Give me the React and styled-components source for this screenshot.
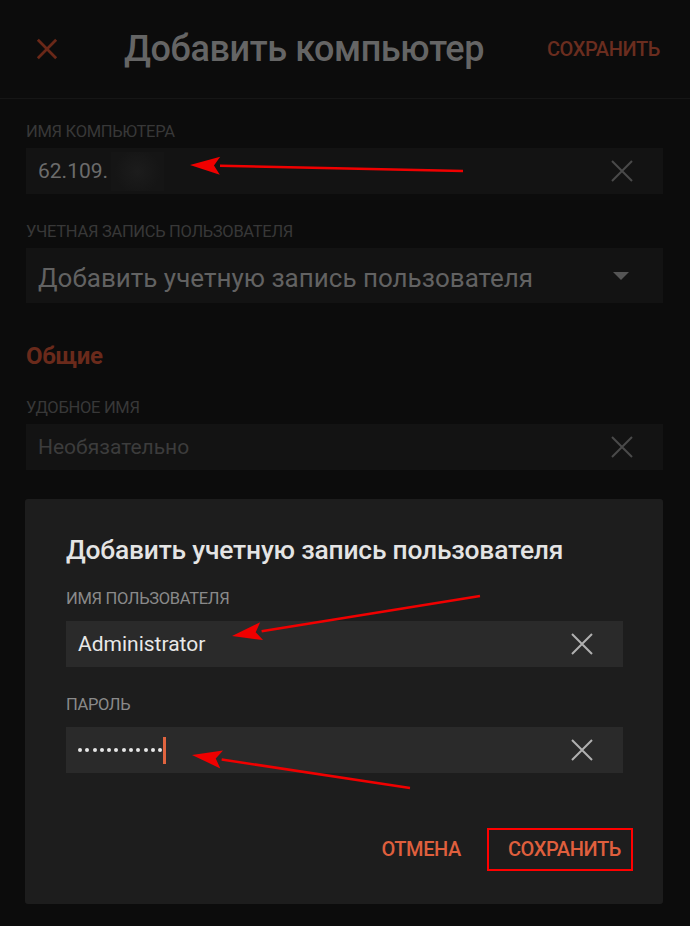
import React from 'react';
import styled, { createGlobalStyle } from 'styled-components';

const GlobalStyle = createGlobalStyle`
  * {
    box-sizing: border-box;
  }

  body {
    margin: 0;
    background: #0c0c0c;
    font-family: Roboto, 'Noto Sans', 'Liberation Sans', sans-serif;
  }
`;

const Page = styled.div`
  position: relative;
  width: 690px;
  height: 926px;
  background: #0c0c0c;
  overflow: hidden;
`;

const Header = styled.header`
  height: 99px;
  border-bottom: 1px solid #161616;
  padding: 0 30px 0 36px;

  display: flex;
  align-items: center;
`;

const HeaderTitle = styled.h1`
  margin: 0 0 0 66px;
  font-size: 36px;
  font-weight: 500;
  color: #656565;
  letter-spacing: -0.4px;
`;

const HeaderAction = styled.span`
  margin-left: auto;
  font-size: 20px;
  font-weight: 500;
  color: #6a2d1f;
  letter-spacing: -0.4px;
`;

const Form = styled.div`
  padding: 22px 27px 0 26px;
`;

const Label = styled.div`
  height: 22px;
  line-height: 22px;
  font-size: 16.5px;
  color: ${(p) => (p.$light ? '#8a8a8a' : '#383838')};
  letter-spacing: -0.3px;
  margin-bottom: ${(p) => p.$gap || 5}px;
`;

const Field = styled.div`
  height: ${(p) => p.$h || 46}px;
  background: ${(p) => (p.$light ? '#2a2a2a' : '#131313')};
  padding: 0 29px 0 12px;
  margin-bottom: ${(p) => p.$mb || 0}px;

  display: flex;
  align-items: center;
`;

const FieldText = styled.span`
  font-size: ${(p) => p.$size || 21}px;
  color: ${(p) => p.$color || '#6b6b6b'};
  flex: 1;
  display: flex;
  align-items: center;
  padding-top: ${(p) => p.$pt || 0}px;
`;

const Blurred = styled.span`
  display: inline-block;
  width: 53px;
  height: 39px;
  margin-left: 3px;
  background: radial-gradient(circle, #1c1c1c 0%, #151515 70%);
`;

const Section = styled.h2`
  margin: 39px 0 27px;
  font-size: 24px;
  font-weight: 700;
  color: #6a2a1b;
  letter-spacing: -0.3px;
`;

const Dialog = styled.div`
  position: absolute;
  left: 25px;
  top: 499px;
  width: 638px;
  height: 405px;
  background: #1d1d1d;
  border-radius: 3px;
  padding: 37px 40px 0 41px;
`;

const DialogTitle = styled.h3`
  margin: 0 0 24px;
  font-size: 26.4px;
  font-weight: 500;
  color: #e4e4e4;
  line-height: 28px;
  letter-spacing: -0.2px;
`;

const Actions = styled.div`
  margin-top: 55px;
  display: flex;
  justify-content: flex-end;
  align-items: center;
  gap: 26px;
  margin-right: -10px;
`;

const ActionBtn = styled.span`
  font-size: 20px;
  font-weight: 500;
  color: #df5f3d;
  letter-spacing: -0.4px;
  padding: ${(p) => (p.$boxed ? '10px 10px 10px 19px' : '0')};
  border: ${(p) => (p.$boxed ? '2px solid #ff0000' : 'none')};
  line-height: 19px;
`;

const Dots = styled.span`
  display: flex;
  gap: 3.3px;
  align-items: center;
`;

const Dot = styled.i`
  width: 4px;
  height: 4px;
  border-radius: 50%;
  background: #e6e6e6;
`;

const Caret = styled.i`
  width: 3px;
  height: 27px;
  margin-left: 1px;
  background: #e0643f;
`;

const Overlay = styled.svg`
  position: absolute;
  left: 0;
  top: 0;
  pointer-events: none;
`;

const Cross = ({ color = '#555', size = 24, w = 2 }) => (
  <svg width={size} height={size} viewBox="0 0 24 24">
    <path d="M2 2L22 22M22 2L2 22" stroke={color} strokeWidth={w} fill="none" />
  </svg>
);

const Arrow = ({ x1, y1, x2, y2 }) => {
  const a = Math.atan2(y2 - y1, x2 - x1);
  const len = 30;
  const wid = 9;
  const bx = x2 - Math.cos(a) * len;
  const by = y2 - Math.sin(a) * len;
  const px = -Math.sin(a) * wid;
  const py = Math.cos(a) * wid;
  return (
    <g>
      <line x1={x1} y1={y1} x2={bx} y2={by} stroke="#f00000" strokeWidth="2.5" />
      <polygon
        points={`${x2},${y2} ${bx + px},${by + py} ${bx + Math.cos(a) * 6},${by + Math.sin(a) * 6} ${bx - px},${by - py}`}
        fill="#f00000"
      />
    </g>
  );
};

export default function App() {
  return (
    <Page>
      <GlobalStyle />
      <Header>
        <Cross color="#6a2818" size={22} w={3} />
        <HeaderTitle>Добавить компьютер</HeaderTitle>
        <HeaderAction>СОХРАНИТЬ</HeaderAction>
      </Header>

      <Form>
        <Label>ИМЯ КОМПЬЮТЕРА</Label>
        <Field $mb={27}>
          <FieldText>
            62.109.<Blurred />
          </FieldText>
          <Cross color="#4a4a4a" size={24} />
        </Field>

        <Label>УЧЕТНАЯ ЗАПИСЬ ПОЛЬЗОВАТЕЛЯ</Label>
        <Field $h={55}>
          <FieldText $size={26} $color="#626262" $pt={4}>
            Добавить учетную запись пользователя
          </FieldText>
          <svg width="16" height="8" viewBox="0 0 16 8" style={{ marginRight: 5 }}>
            <polygon points="0,0 16,0 8,8" fill="#555" />
          </svg>
        </Field>

        <Section>Общие</Section>

        <Label>УДОБНОЕ ИМЯ</Label>
        <Field>
          <FieldText $color="#3c3c3c">Необязательно</FieldText>
          <Cross color="#4a4a4a" size={24} />
        </Field>
      </Form>

      <Dialog>
        <DialogTitle>Добавить учетную запись пользователя</DialogTitle>
        <Label $light $gap={11}>ИМЯ ПОЛЬЗОВАТЕЛЯ</Label>
        <Field $light $mb={27}>
          <FieldText $color="#e8e8e8">Administrator</FieldText>
          <Cross color="#b0b0b0" size={24} />
        </Field>
        <Label $light $gap={11}>ПАРОЛЬ</Label>
        <Field $light>
          <FieldText>
            <Dots>
              {Array.from({ length: 12 }).map((_, i) => (
                <Dot key={i} />
              ))}
            </Dots>
            <Caret />
          </FieldText>
          <Cross color="#b0b0b0" size={24} />
        </Field>
        <Actions>
          <ActionBtn>ОТМЕНА</ActionBtn>
          <ActionBtn $boxed>СОХРАНИТЬ</ActionBtn>
        </Actions>
      </Dialog>

      <Overlay width="690" height="926">
        <Arrow x1={463} y1={171} x2={190} y2={165} />
        <Arrow x1={480} y1={596} x2={232} y2={636} />
        <Arrow x1={410} y1={788} x2={192} y2={755} />
      </Overlay>
    </Page>
  );
}
